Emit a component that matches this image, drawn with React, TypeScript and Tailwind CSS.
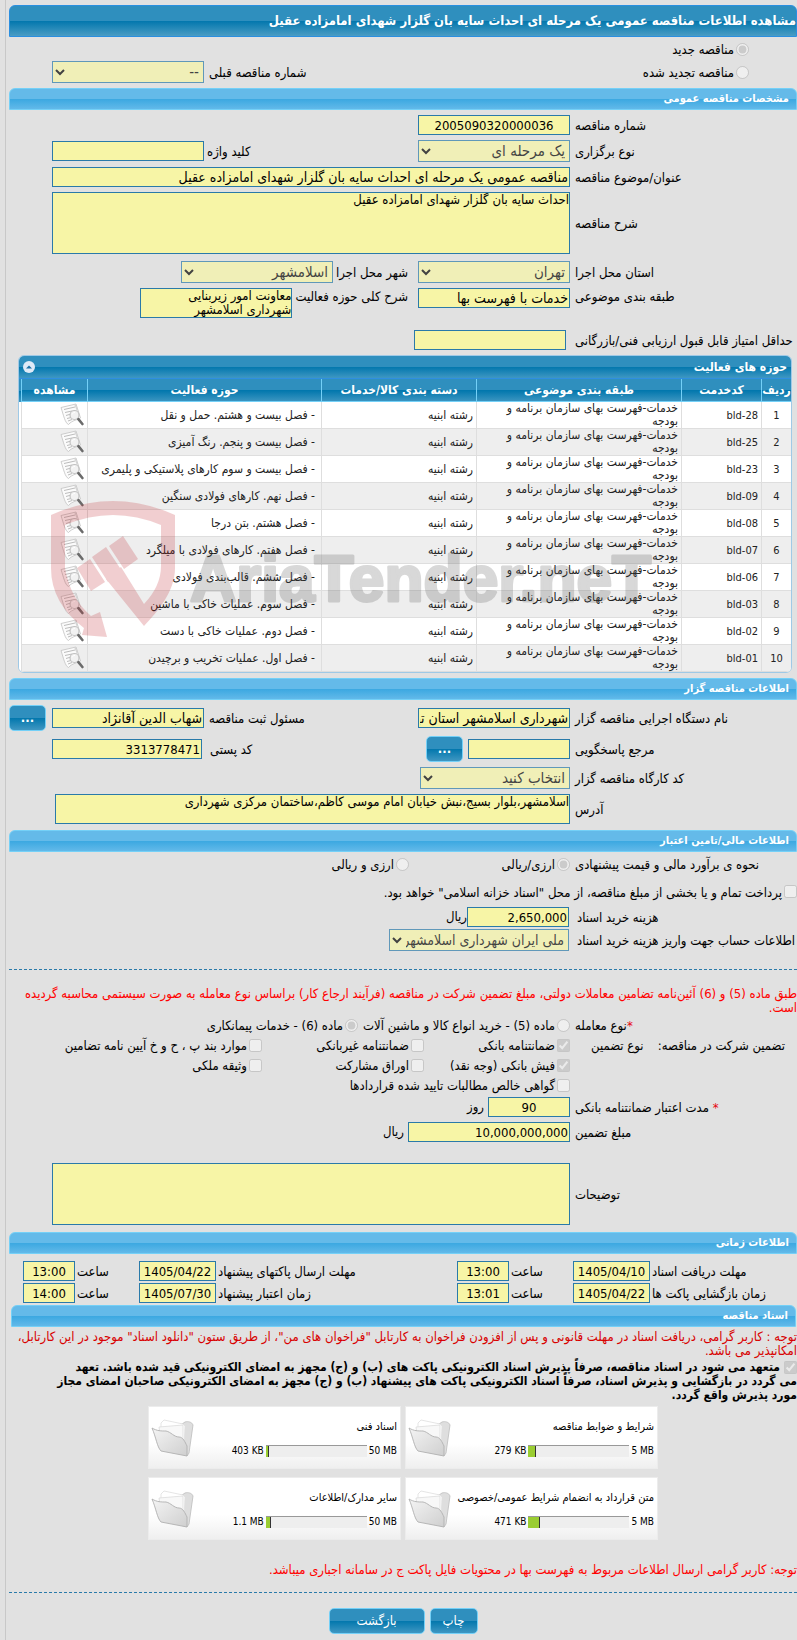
import type { ReactNode } from "react";

const FIELD =
  "block rounded-none border border-[#2a7aa9] bg-[#f7f5a6] text-black outline-none";

function TextField({
  id,
  value = "",
  className = "w-[152px]",
  size = "text-[14px]",
}: {
  id: string;
  value?: string;
  className?: string;
  size?: string;
}) {
  return (
    <input
      id={id}
      type="text"
      readOnly
      defaultValue={value}
      className={`${FIELD} ${size} h-5 shrink-0 px-px leading-[16px] ${className}`}
    />
  );
}

function NumberField(props: { id: string; value: string; className: string }) {
  return <TextField {...props} size="text-[13px]" />;
}

function Area({ id, value = "", className }: { id: string; value?: string; className: string }) {
  return (
    <textarea
      id={id}
      readOnly
      defaultValue={value}
      className={`${FIELD} resize-none overflow-hidden text-[13px] leading-[14px] ${className}`}
    />
  );
}

function Choice({
  id,
  value,
  className = "w-[152px]",
  size = "text-[15px]",
}: {
  id: string;
  value: string;
  className?: string;
  size?: string;
}) {
  return (
    <select
      id={id}
      disabled
      className={`${FIELD} ${size} h-[22px] shrink-0 leading-[18px] opacity-70 ${className}`}
    >
      <option>{value}</option>
    </select>
  );
}

function Tick({
  id,
  type,
  label,
  checked = false,
  className = "",
}: {
  id: string;
  type: "radio" | "checkbox";
  label: string;
  checked?: boolean;
  className?: string;
}) {
  return (
    <span className={`flex items-center gap-0.5 whitespace-nowrap ${className}`}>
      <input
        id={id}
        type={type}
        disabled
        defaultChecked={checked}
        className="size-[13px] shrink-0"
      />
      <label htmlFor={id} className="pt-0.5">
        {label}
      </label>
    </span>
  );
}

function Row({
  id,
  label,
  required = false,
  top = false,
  children,
}: {
  id?: string;
  label: string;
  required?: boolean;
  top?: boolean;
  children: ReactNode;
}) {
  return (
    <div className={`flex gap-[5px] pe-[43px] ${top ? "items-start" : "items-center"}`}>
      <label htmlFor={id} className="w-[222px] shrink-0 whitespace-nowrap pt-0.5 text-left">
        {required && <span className="text-red-600">* </span>}
        {label}
      </label>
      <div className={`flex min-w-0 grow ${top ? "items-start" : "items-center"}`}>{children}</div>
    </div>
  );
}

function SectionTitle({ children }: { children: ReactNode }) {
  return (
    <h2 className="flex h-[22px] items-center rounded-t-md border border-[#74d0f7] bg-[linear-gradient(#64bae9_0,#64bae9_50%,#3ba8e1_50%,#62b9e9_100%)] px-[7px] text-[11px] font-bold leading-[14px] text-white">
      {children}
    </h2>
  );
}

function BlueButton({ children, className }: { children: ReactNode; className: string }) {
  return (
    <button
      type="button"
      className={`h-[26px] shrink-0 rounded-[5px] border border-[#74d0f7] bg-[linear-gradient(#2f8fbe_0,#2f8fbe_50%,#0277ad_50%,#3f97c2_100%)] text-[13px] leading-[16px] text-white ${className}`}
    >
      {children}
    </button>
  );
}

function DocumentIcon() {
  return (
    <svg width="24" height="24" viewBox="0 0 24 24" aria-hidden="true">
      <path d="M1 4.500 16 1l4.500 14c-3 2-8 2-12 6.500C5 20 3.500 12 1 4.500Z" fill="#fbfbfb" stroke="#c2c2c2" strokeWidth=".8" />
      <path d="m4 6.500 11-2.500M5 9.500 12 8M6 12.500l5-1.500M7 15.500l4-1M8 18l4-1.500" stroke="#b4b4b4" strokeWidth=".9" fill="none" />
      <path d="m15 1.500 2.500 6" stroke="#d5d5d5" strokeWidth="1.500" />
      <circle cx="14.500" cy="12" r="4.500" fill="#f1f1f1" fillOpacity=".9" stroke="#c2c2c2" strokeWidth="1.200" />
      <path d="M12 11.500c.5-1.500 1.500-2 3-2" stroke="#fff" fill="none" />
      <path d="m18.400 16.200 4 4.800" stroke="#6b6b6b" strokeWidth="2.600" strokeLinecap="round" />
    </svg>
  );
}

function FolderIcon() {
  return (
    <svg width="44" height="40" viewBox="0 0 44 40" aria-hidden="true">
      <defs>
        <linearGradient id="folderFront" x1="0" y1="0" x2="1" y2="1">
          <stop offset="0" stopColor="#f4f4f4" />
          <stop offset="1" stopColor="#cfcfcf" />
        </linearGradient>
      </defs>
      <path d="M9 11 31 6l3-2c3-1 7 0 8 3l-4 28-2 3C27 30 15 20 9 11Z" fill="#dedede" stroke="#bdbdbd" strokeWidth=".8" />
      <path d="m10 5 3-3 19 4 2 2-1 22-23-8Z" fill="#fff" stroke="#dedede" strokeWidth=".8" />
      <path d="m8 9 24-2v25l-22-8Z" fill="#f8f8f8" stroke="#dcdcdc" strokeWidth=".8" />
      <path d="M1 10c5 3 9 3 14 3 5 1 8 6 13 6 4 0 6 5 8 9v10L10 33C6 29 5 19 1 10Z" fill="url(#folderFront)" stroke="#b0b0b0" strokeWidth=".9" />
    </svg>
  );
}

function Watermark() {
  return (
    <svg
      className="pointer-events-none absolute left-[31px] top-[144px]"
      width="620"
      height="140"
      viewBox="0 0 620 140"
      aria-hidden="true"
    >
      <g fill="#c1272d" opacity=".22">
        <path d="M1 15Q63-13 125 15V68C125 92 107 112 94 126L56 79 71 67 94 104Q111 86 111 66V25Q63 5 15 25V68Q20 98 41 116L50 112 57 137 32 135 34 128Q1 103 1 68Z" />
        <path d="m59 46 14-10 15 23-14 10ZM42 57l14-10 16 24-14 11ZM27 68l13-9 15 23-14 9Z" />
      </g>
      <text
        x="140"
        y="101"
        fill="#505050"
        stroke="#505050"
        strokeWidth="3"
        strokeLinejoin="round"
        opacity=".22"
        className="font-['Liberation_Sans',sans-serif] text-[64px] font-bold"
        direction="ltr"
      >
        AriaTender.neT
      </text>
    </svg>
  );
}

const activities = [
  ["bld-28", "- فصل بیست و هشتم. حمل و نقل"],
  ["bld-25", "- فصل بیست و پنجم. رنگ آمیزی"],
  ["bld-23", "- فصل بیست و سوم کارهای پلاستیکی و پلیمری"],
  ["bld-09", "- فصل نهم. کارهای فولادی سنگین"],
  ["bld-08", "- فصل هشتم. بتن درجا"],
  ["bld-07", "- فصل هفتم. کارهای فولادی با میلگرد"],
  ["bld-06", "- فصل ششم. قالب‌بندی فولادی"],
  ["bld-03", "- فصل سوم. عملیات خاکی با ماشین"],
  ["bld-02", "- فصل دوم. عملیات خاکی با دست"],
  ["bld-01", "- فصل اول. عملیات تخریب و برچیدن"],
];

function ActivityPanel() {
  const th =
    "h-[23px] border-b border-l border-b-[#74d0f7] border-l-[#74d0f7] p-0 text-[12px] font-bold leading-[16px]";
  const td = "h-[27px] border-b border-l border-[#dedede] py-0";
  return (
    <section className="relative me-[9px] ms-[5px] overflow-hidden rounded-md border border-[#9fc9e6] bg-white">
      <div className="flex h-[22px] items-center justify-between bg-[linear-gradient(#2f8fbe_0,#2f8fbe_50%,#0277ad_50%,#3f97c2_100%)] px-1 text-white">
        <h3 className="text-[12px] font-bold leading-[16px]">حوزه های فعالیت</h3>
        <button
          type="button"
          aria-label="بستن"
          className="flex size-3 items-center justify-center rounded-full bg-[#dfeaf7]"
        >
          <svg width="6" height="4" viewBox="0 0 6 4" aria-hidden="true">
            <path d="M0 3.500 3 .5l3 3Z" fill="#1a6fa5" />
          </svg>
        </button>
      </div>
      <div className="border-t border-[#2f8fe0] bg-[linear-gradient(#2f8fbe_0,#2f8fbe_12px,#0277ad_12px,#3f97c2_23px,#fff_23px)] pe-0.5">
        <table className="w-full table-fixed border-separate border-spacing-0 text-[12px] leading-[13px] text-[#222]">
          <thead>
            <tr className="bg-[linear-gradient(#2f8fbe_0,#2f8fbe_50%,#0277ad_50%,#3f97c2_100%)] text-white">
              <th className={`${th} w-[30px]`}>ردیف</th>
              <th className={`${th} w-[80px]`}>کدخدمت</th>
              <th className={`${th} w-[205px]`}>طبقه بندی موضوعی</th>
              <th className={`${th} w-[155px]`}>دسته بندی کالا/خدمات</th>
              <th className={th}>حوزه فعالیت</th>
              <th className={`${th} w-[66px]`}>مشاهده</th>
            </tr>
          </thead>
          <tbody>
            {activities.map(([code, name], i) => (
              <tr key={code} className="bg-white even:bg-[#eee]">
                <td className={`${td} px-0 text-center text-[11px]`}>{i + 1}</td>
                <td className={`${td} px-[3px] text-right text-[11px]`}>
                  <bdi>{code}</bdi>
                </td>
                <td className={`${td} ps-[3px] pe-6`}>خدمات-فهرست بهای سازمان برنامه و بودجه</td>
                <td className={`${td} px-[3px]`}>رشته ابنیه</td>
                <td className={`${td} whitespace-nowrap ps-1.5`}>{name}</td>
                <td className={`${td} ps-[3px]`}>
                  <button type="button" aria-label="مشاهده" className="block">
                    <DocumentIcon />
                  </button>
                </td>
              </tr>
            ))}
          </tbody>
        </table>
      </div>
      <Watermark />
    </section>
  );
}

function FileCard({
  title,
  limit,
  size,
  used,
}: {
  title: string;
  limit: string;
  size: string;
  used: number;
}) {
  return (
    <a
      href="#files"
      className="flex h-[63px] items-center justify-between border border-[#ececec] bg-[linear-gradient(#fff_0,#fff_60%,#efefef_100%)] ps-[3px] pe-0.5 text-[10px] leading-[14px] text-black"
    >
      <span className="flex min-w-0 flex-col gap-2.5 pt-0.5">
        <span className="whitespace-nowrap text-[11px]">{title}</span>
        <span className="flex items-center gap-0.5">
          <bdi className="whitespace-nowrap">{limit}</bdi>
          <span className="flex h-3 w-[101px] justify-end border-t border-[#999] bg-[#eee]">
            <span className="h-full border-r border-[#333] bg-[#9acd32]" style={{ width: used }} />
          </span>
          <bdi className="whitespace-nowrap">{size}</bdi>
        </span>
      </span>
      <FolderIcon />
    </a>
  );
}

function DateTime({
  id,
  label,
  date,
  time,
}: {
  id: string;
  label: string;
  date: string;
  time: string;
}) {
  return (
    <div className="flex items-center gap-0.5">
      <label htmlFor={id} className="w-[145px] whitespace-nowrap pt-0.5 text-left">
        {label}
      </label>
      <NumberField id={id} value={date} className="w-[77px] text-center" />
      <label htmlFor={`${id}-time`} className="ms-auto pt-0.5">
        ساعت
      </label>
      <NumberField id={`${id}-time`} value={time} className="w-[52px] text-center" />
    </div>
  );
}

export default function App() {
  return (
    <div className="flex min-h-screen flex-col bg-[#e1e1e1] pe-[5px]" dir="rtl">
      <main className="flex grow flex-col border-l border-[#c8c8c8] pe-[3px] pt-[5px] font-['DejaVu_Sans_Condensed','DejaVu_Sans',sans-serif] text-[13px] leading-[14px] text-black">
        <h1 className="flex h-8 items-center whitespace-nowrap rounded-t-md border border-[#2a8fe0] bg-[linear-gradient(#2f8fbe_0,#2f8fbe_50%,#0277ad_50%,#4a9cc4_100%)] text-[13px] font-bold leading-[16px] text-white">
          مشاهده اطلاعات مناقصه عمومی یک مرحله ای احداث سایه بان گلزار شهدای امامزاده عقیل
        </h1>

        <div className="flex h-6 items-center ps-12">
          <Tick id="kind-new" type="radio" label="مناقصه جدید" checked />
        </div>
        <div className="mb-[5px] flex h-[22px] items-center pe-[43px] ps-12">
          <Tick id="kind-renewed" type="radio" label="مناقصه تجدید شده" />
          <div className="ms-auto flex items-center gap-[5px]">
            <label htmlFor="previous" className="pt-0.5">
              شماره مناقصه قبلی
            </label>
            <Choice id="previous" value="--" />
          </div>
        </div>

        <SectionTitle>مشخصات مناقصه عمومی</SectionTitle>
        <div className="flex flex-col gap-[5px] py-[5px]">
          <Row id="number" label="شماره مناقصه">
            <NumberField id="number" value="2005090320000036" className="w-[152px] text-center" />
          </Row>
          <Row id="stage" label="نوع برگزاری">
            <Choice id="stage" value="یک مرحله ای" />
            <div className="ms-auto flex items-center gap-[3px]">
              <label htmlFor="keyword" className="pt-0.5">
                کلید واژه
              </label>
              <TextField id="keyword" />
            </div>
          </Row>
          <Row id="subject" label="عنوان/موضوع مناقصه">
            <TextField
              id="subject"
              className="w-full"
              value="مناقصه عمومی یک مرحله ای احداث سایه بان گلزار شهدای امامزاده عقیل"
            />
          </Row>
          <Row id="description" label="شرح مناقصه">
            <Area
              id="description"
              className="h-[62px] w-full"
              value="احداث سایه بان گلزار شهدای امامزاده عقیل"
            />
          </Row>
          <div className="pt-0.5">
            <Row id="province" label="استان محل اجرا">
              <Choice id="province" value="تهران" />
              <div className="ms-2.5 flex items-center gap-[3px]">
                <label htmlFor="city" className="pt-0.5">
                  شهر محل اجرا
                </label>
                <Choice id="city" value="اسلامشهر" />
              </div>
            </Row>
          </div>
          <Row id="category" label="طبقه بندی موضوعی" top>
            <TextField id="category" value="خدمات با فهرست بها" />
            <div className="ms-2.5 flex items-start gap-[3px]">
              <label htmlFor="field" className="whitespace-nowrap pt-0.5">
                شرح کلی حوزه فعالیت
              </label>
              <Area
                id="field"
                className="h-[30px] w-[152px]"
                value="معاونت امور زیربنایی شهرداری اسلامشهر"
              />
            </div>
          </Row>
          <div className="flex items-center gap-[9px] pt-[7px]">
            <label htmlFor="minimum" className="w-[222px] whitespace-nowrap pt-0.5 text-left">
              حداقل امتیاز قابل قبول ارزیابی فنی/بازرگانی
            </label>
            <TextField id="minimum" />
          </div>
        </div>

        <ActivityPanel />

        <div className="pt-[5px]">
          <SectionTitle>اطلاعات مناقصه گزار</SectionTitle>
        </div>
        <div className="flex flex-col gap-[5px] pb-1.5 pt-[5px]">
          <div className="flex items-center gap-[5px]">
            <label htmlFor="agency" className="w-[222px] whitespace-nowrap pt-0.5 text-left">
              نام دستگاه اجرایی مناقصه گزار
            </label>
            <TextField id="agency" value="شهرداری اسلامشهر استان تهران" />
            <label htmlFor="registrar" className="ms-auto pt-0.5">
              مسئول ثبت مناقصه
            </label>
            <TextField id="registrar" value="شهاب الدین آقانژاد" />
            <BlueButton className="ms-px w-[37px] font-bold">...</BlueButton>
          </div>
          <Row id="contact" label="مرجع پاسخگویی">
            <TextField id="contact" className="w-[102px]" />
            <BlueButton className="ms-[5px] w-[37px] font-bold">...</BlueButton>
            <div className="ms-auto flex items-center gap-2">
              <label htmlFor="postal" className="pt-0.5">
                کد پستی
              </label>
              <NumberField id="postal" value="3313778471" className="w-[150px]" />
            </div>
          </Row>
          <Row id="workshop" label="کد کارگاه مناقصه گزار">
            <Choice id="workshop" value="انتخاب کنید" className="w-[150px]" />
          </Row>
          <Row id="address" label="آدرس">
            <Area
              id="address"
              className="me-[3px] h-[30px] w-full"
              value="اسلامشهر،بلوار بسیج،نبش خیابان امام موسی کاظم،ساختمان مرکزی شهرداری"
            />
          </Row>
        </div>

        <SectionTitle>اطلاعات مالی/تامین اعتبار</SectionTitle>
        <div className="flex flex-col">
          <div className="flex h-6 items-center gap-[5px]">
            <span className="w-[222px] whitespace-nowrap pt-0.5 text-left">
              نحوه ی برآورد مالی و قیمت پیشنهادی
            </span>
            <Tick id="currency-either" type="radio" label="ارزی/ریالی" checked className="w-[156px]" />
            <Tick id="currency-both" type="radio" label="ارزی و ریالی" />
          </div>
          <div className="flex h-[31px] items-center">
            <Tick
              id="treasury"
              type="checkbox"
              label={'پرداخت تمام و یا بخشی از مبلغ مناقصه، از محل "اسناد خزانه اسلامی" خواهد بود.'}
            />
          </div>
          <div className="flex items-center gap-2">
            <label htmlFor="fee" className="w-[220px] pt-0.5 text-left">
              هزینه خرید اسناد
            </label>
            <span className="flex items-center">
              <NumberField id="fee" value="2,650,000" className="w-[102px]" />
              ریال
            </span>
          </div>
          <div className="mt-0.5 flex items-center gap-2">
            <label htmlFor="account" className="w-[220px] whitespace-nowrap pt-0.5 text-left">
              اطلاعات حساب جهت واریز هزینه خرید اسناد
            </label>
            <Choice
              id="account"
              value="ملی ایران شهرداری اسلامشهر"
              className="w-[180px]"
              size="text-[14px]"
            />
          </div>
        </div>

        <hr className="mt-[18px] border-dashed border-[#2a7aa9]" />

        <p className="mt-[17px] text-[#f00]">
          طبق ماده (5) و (6) آئین‌نامه تضامین معاملات دولتی، مبلغ تضمین شرکت در مناقصه (فرآیند ارجاع
          کار) براساس نوع معامله به صورت سیستمی محاسبه گردیده است.
        </p>

        <div className="flex h-5 items-center gap-[5px]">
          <span className="w-[222px] pt-0.5 text-left">
            <span className="text-red-600">*</span>نوع معامله
          </span>
          <Tick id="deal-5" type="radio" label="ماده (5) - خرید انواع کالا و ماشین آلات" />
          <Tick id="deal-6" type="radio" label="ماده (6) - خدمات پیمانکاری" checked />
        </div>
        <div className="grid grid-cols-[222px_146px_162px_1fr]">
          <div className="flex h-5 items-center justify-between pe-4 ps-3 pt-0.5">
            <span>تضمین شرکت در مناقصه:</span>
            <span>نوع تضمین</span>
          </div>
          <Tick id="g1" type="checkbox" label="ضمانتنامه بانکی" checked className="ps-[5px]" />
          <Tick id="g2" type="checkbox" label="ضمانتنامه غیربانکی" className="ps-[5px]" />
          <Tick id="g3" type="checkbox" label="موارد بند پ ، ح و خ آیین نامه تضامین" className="ps-[5px]" />
          <Tick id="g4" type="checkbox" label="فیش بانکی (وجه نقد)" checked className="col-start-2 h-5 ps-[5px]" />
          <Tick id="g5" type="checkbox" label="اوراق مشارکت" className="ps-[5px]" />
          <Tick id="g6" type="checkbox" label="وثیقه ملکی" className="ps-[5px]" />
          <Tick
            id="g7"
            type="checkbox"
            label="گواهی خالص مطالبات تایید شده قراردادها"
            className="col-span-2 col-start-2 h-5 ps-[5px]"
          />
        </div>
        <div className="flex flex-col gap-[5px] pb-[7px] pt-0.5">
          <Row id="validity" label="مدت اعتبار ضمانتنامه بانکی" required>
            <NumberField id="validity" value="90" className="w-[82px] text-center" />
            <span className="ms-1">روز</span>
          </Row>
          <Row id="amount" label="مبلغ تضمین">
            <NumberField id="amount" value="10,000,000,000" className="w-[162px]" />
            <span className="ms-1">ریال</span>
          </Row>
          <div className="pt-4">
            <Row id="notes" label="توضیحات">
              <Area id="notes" className="h-[62px] w-full" />
            </Row>
          </div>
        </div>

        <SectionTitle>اطلاعات زمانی</SectionTitle>
        <div className="grid grid-cols-[340px_340px] gap-x-[94px] gap-y-0.5 pb-0.5 pt-[7px]">
          <DateTime id="receive" label="مهلت دریافت اسناد" date="1405/04/10" time="13:00" />
          <DateTime id="send" label="مهلت ارسال پاکتهای پیشنهاد" date="1405/04/22" time="13:00" />
          <DateTime id="open" label="زمان بازگشایی پاکت ها" date="1405/04/22" time="13:01" />
          <DateTime id="valid" label="زمان اعتبار پیشنهاد" date="1405/07/30" time="14:00" />
        </div>

        <div className="ps-px pe-0.5">
          <SectionTitle>اسناد مناقصه</SectionTitle>
        </div>
        <p className="mt-[3px] text-[#d80000]">
          توجه : کاربر گرامی، دریافت اسناد در مهلت قانونی و پس از افزودن فراخوان به کارتابل "فراخوان
          های من"، از طریق ستون "دانلود اسناد" موجود در این کارتابل، امکانپذیر می باشد.
        </p>
        <p className="mt-0.5 text-[12px] font-bold">
          <input
            id="commitment"
            type="checkbox"
            disabled
            defaultChecked
            className="me-1 size-[13px] align-middle"
          />
          <label htmlFor="commitment">
            متعهد می شود در اسناد مناقصه، صرفاً پذیرش اسناد الکترونیکی پاکت های (ب) و (ج) مجهز به
            امضای الکترونیکی قید شده باشد. تعهد
            <br />
            می گردد در بازگشایی و پذیرش اسناد، صرفاً اسناد الکترونیکی پاکت های پیشنهاد (ب) و (ج)
            مجهز به امضای الکترونیکی صاحبان امضای مجاز
            <br />
            مورد پذیرش واقع گردد.
          </label>
        </p>

        <div className="mt-1 grid grid-cols-[253px_253px] justify-center gap-x-1 gap-y-2">
          <FileCard title="شرایط و ضوابط مناقصه" limit="5 MB" size="279 KB" used={8} />
          <FileCard title="اسناد فنی" limit="50 MB" size="403 KB" used={3} />
          <FileCard title="متن قرارداد به انضمام شرایط عمومی/خصوصی" limit="5 MB" size="471 KB" used={12} />
          <FileCard title="سایر مدارک/اطلاعات" limit="50 MB" size="1.1 MB" used={5} />
        </div>

        <p className="mt-[23px] text-[#f00]">
          توجه: کاربر گرامی ارسال اطلاعات مربوط به فهرست بها در محتویات فایل پاکت ج در سامانه اجباری
          میباشد.
        </p>
        <hr className="mt-[15px] border-dashed border-[#2a7aa9]" />
        <div className="mt-[15px] flex justify-center gap-[5px]">
          <BlueButton className="w-12">چاپ</BlueButton>
          <BlueButton className="w-24">بازگشت</BlueButton>
        </div>
      </main>
    </div>
  );
}
